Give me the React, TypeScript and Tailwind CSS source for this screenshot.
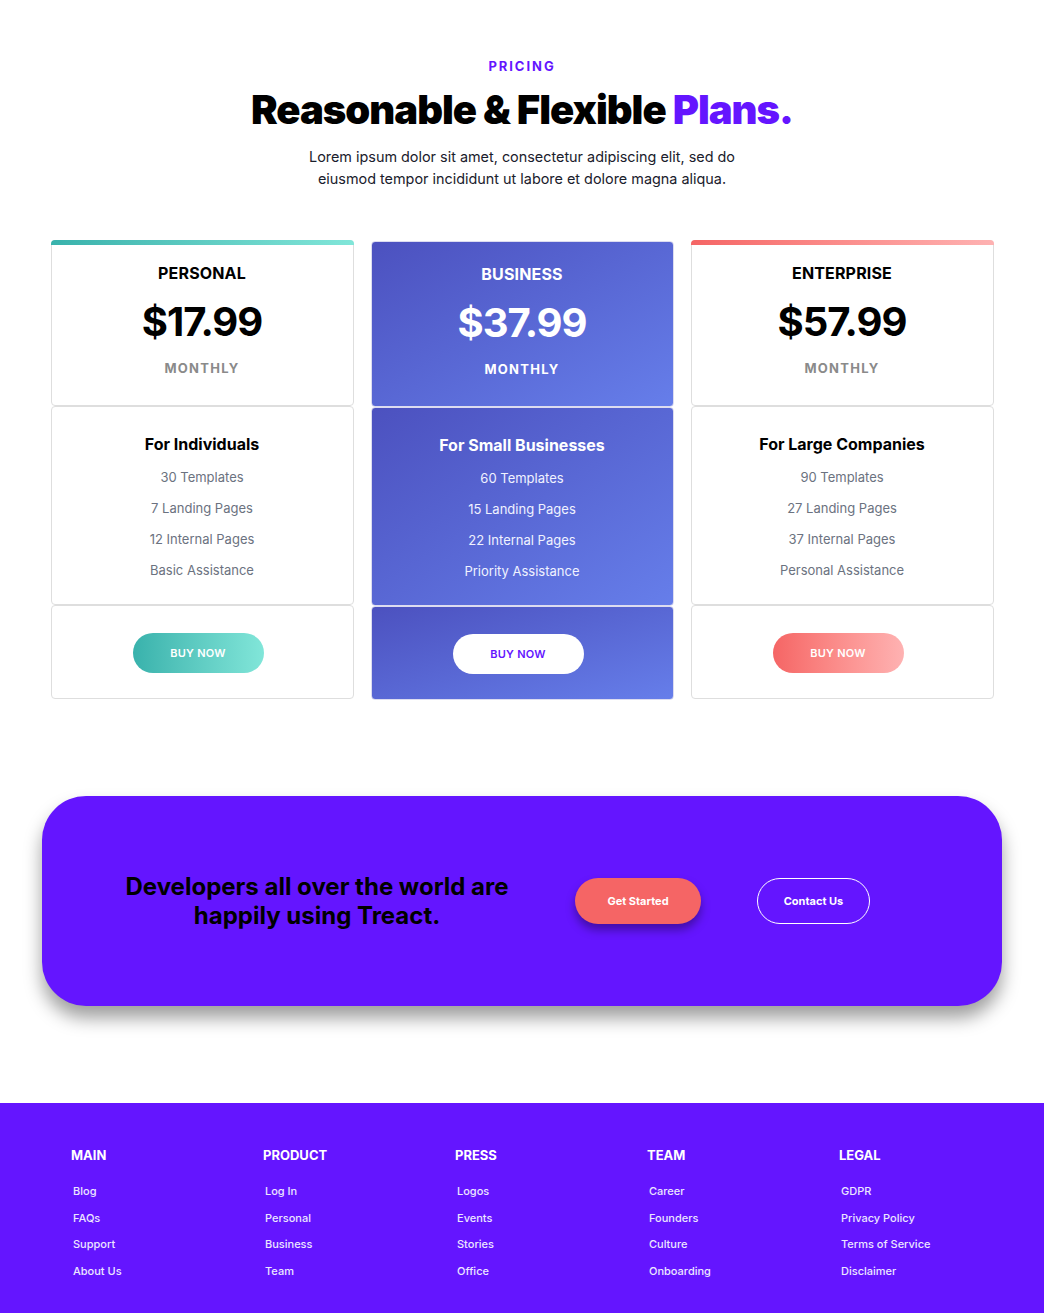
const plans = [
  {
    name: "Personal",
    price: "$17.99",
    title: "For Individuals",
    features: ["30 Templates", "7 Landing Pages", "12 Internal Pages", "Basic Assistance"],
    strip: "bg-linear-to-r from-[#38b2ac] to-[#81e6d9]",
    button: "bg-linear-to-r from-[#38b2ac] to-[#81e6d9] text-white",
    featured: false,
  },
  {
    name: "Business",
    price: "$37.99",
    title: "For Small Businesses",
    features: ["60 Templates", "15 Landing Pages", "22 Internal Pages", "Priority Assistance"],
    strip: "",
    button: "bg-white text-[#6415ff] font-medium",
    featured: true,
  },
  {
    name: "Enterprise",
    price: "$57.99",
    title: "For Large Companies",
    features: ["90 Templates", "27 Landing Pages", "37 Internal Pages", "Personal Assistance"],
    strip: "bg-linear-to-r from-[#f56565] to-[#feb2b2]",
    button: "bg-linear-to-r from-[#f56565] to-[#feb2b2] text-white",
    featured: false,
  },
];

const footer = [
  { title: "Main", links: ["Blog", "FAQs", "Support", "About Us"] },
  { title: "Product", links: ["Log In", "Personal", "Business", "Team"] },
  { title: "Press", links: ["Logos", "Events", "Stories", "Office"] },
  { title: "Team", links: ["Career", "Founders", "Culture", "Onboarding"] },
  { title: "Legal", links: ["GDPR", "Privacy Policy", "Terms of Service", "Disclaimer"] },
];

export default function App() {
  return (
    <div className="min-h-screen bg-white font-['Inter',sans-serif] text-black">
      {/* PRICING */}
      <section className="pt-[57px] flex flex-col items-center">
        <p className="text-[13px] leading-[18px] font-bold tracking-[0.15em] text-[#6415ff]">PRICING</p>
        <h1 className="mt-[9px] text-[40px] leading-[52px] font-black tracking-tight">
          Reasonable &amp; Flexible <span className="text-[#6415ff]">Plans.</span>
        </h1>
        <p className="mt-[10px] w-[470px] text-center text-[14.4px] leading-[22px] text-[#1a202c]">
          Lorem ipsum dolor sit amet, consectetur adipiscing elit, sed do eiusmod tempor incididunt ut labore et dolore magna aliqua.
        </p>

        {/* PLAN CARDS */}
        <div className="mt-[50px] grid grid-cols-[repeat(3,303px)] gap-[17px]">
          {plans.map((plan) => {
            const box = plan.featured
              ? "bg-linear-to-br from-[#4c51bf] to-[#667eea] border border-[#dcdcf0] rounded-[4px] text-white"
              : "bg-white border border-[#dedede] rounded-[4px]";
            return (
              <div key={plan.name} className="flex flex-col">
                {/* top */}
                <div className={`${box} relative flex flex-col items-center pb-[27px] ${plan.featured ? "pt-[21px] mt-[1px]" : "pt-[21px]"}`}>
                  {!plan.featured && (
                    <div className={`absolute -top-px -left-px -right-px h-[5px] rounded-t-[4px] ${plan.strip}`} />
                  )}
                  <h3 className="text-[16px] leading-[22px] font-bold uppercase tracking-[0.01em]">{plan.name}</h3>
                  <p className="mt-[14px] text-[40px] leading-[48px] font-bold tracking-tight">{plan.price}</p>
                  <p className={`mt-[12px] text-[13px] leading-[20px] font-bold tracking-[0.1em] ${plan.featured ? "text-white" : "text-[#8a8a8a]"}`}>
                    MONTHLY
                  </p>
                </div>
                {/* features */}
                <div className={`${box} flex flex-col items-center pt-[25px] pb-[24px]`}>
                  <h4 className="text-[16px] leading-[24px] font-bold">{plan.title}</h4>
                  <ul className="mt-[11px] flex flex-col items-center gap-[11px]">
                    {plan.features.map((f) => (
                      <li key={f} className={`text-[13px] leading-[20px] ${plan.featured ? "text-[#f0f2ff]" : "text-[#6b7280]"}`}>
                        {f}
                      </li>
                    ))}
                  </ul>
                </div>
                {/* button */}
                <div className={`${box} flex justify-center pt-[27px] pb-[25px]`}>
                  <button className={`w-[131px] h-[40px] rounded-full text-[11px] font-semibold tracking-wide -translate-x-[4px] ${plan.button}`}>
                    BUY NOW
                  </button>
                </div>
              </div>
            );
          })}
        </div>
      </section>

      {/* CTA */}
      <section className="mt-[96px] px-[42px]">
        <div className="h-[210px] rounded-[44px] bg-[#6415ff] shadow-[0_12px_18px_rgba(0,0,0,0.38)] flex items-center pl-[55px]">
          <h2 className="w-[440px] text-center text-[24px] leading-[29px] font-bold text-black">
            Developers all over the world are happily using Treact.
          </h2>
          <button className="ml-[38px] w-[126px] h-[46px] rounded-full bg-[#f56565] text-white text-[11px] font-bold shadow-[0_6px_10px_rgba(0,0,0,0.35)]">
            Get Started
          </button>
          <button className="ml-[56px] w-[113px] h-[46px] rounded-full border border-white text-white text-[11px] font-bold">
            Contact Us
          </button>
        </div>
      </section>

      {/* FOOTER */}
      <footer className="mt-[97px] bg-[#6415ff] pt-[44px] pb-[34px] pl-[71px]">
        <div className="grid grid-cols-[repeat(5,192px)]">
          {footer.map((col) => (
            <div key={col.title}>
              <h5 className="text-[13px] leading-[16px] font-bold uppercase text-white">{col.title}</h5>
              <ul className="mt-[20px] pl-[2px] flex flex-col gap-[9.7px]">
                {col.links.map((l) => (
                  <li key={l} className="text-[11px] leading-[17px] font-medium text-[#ece6ff]">
                    {l}
                  </li>
                ))}
              </ul>
            </div>
          ))}
        </div>
      </footer>
    </div>
  );
}
